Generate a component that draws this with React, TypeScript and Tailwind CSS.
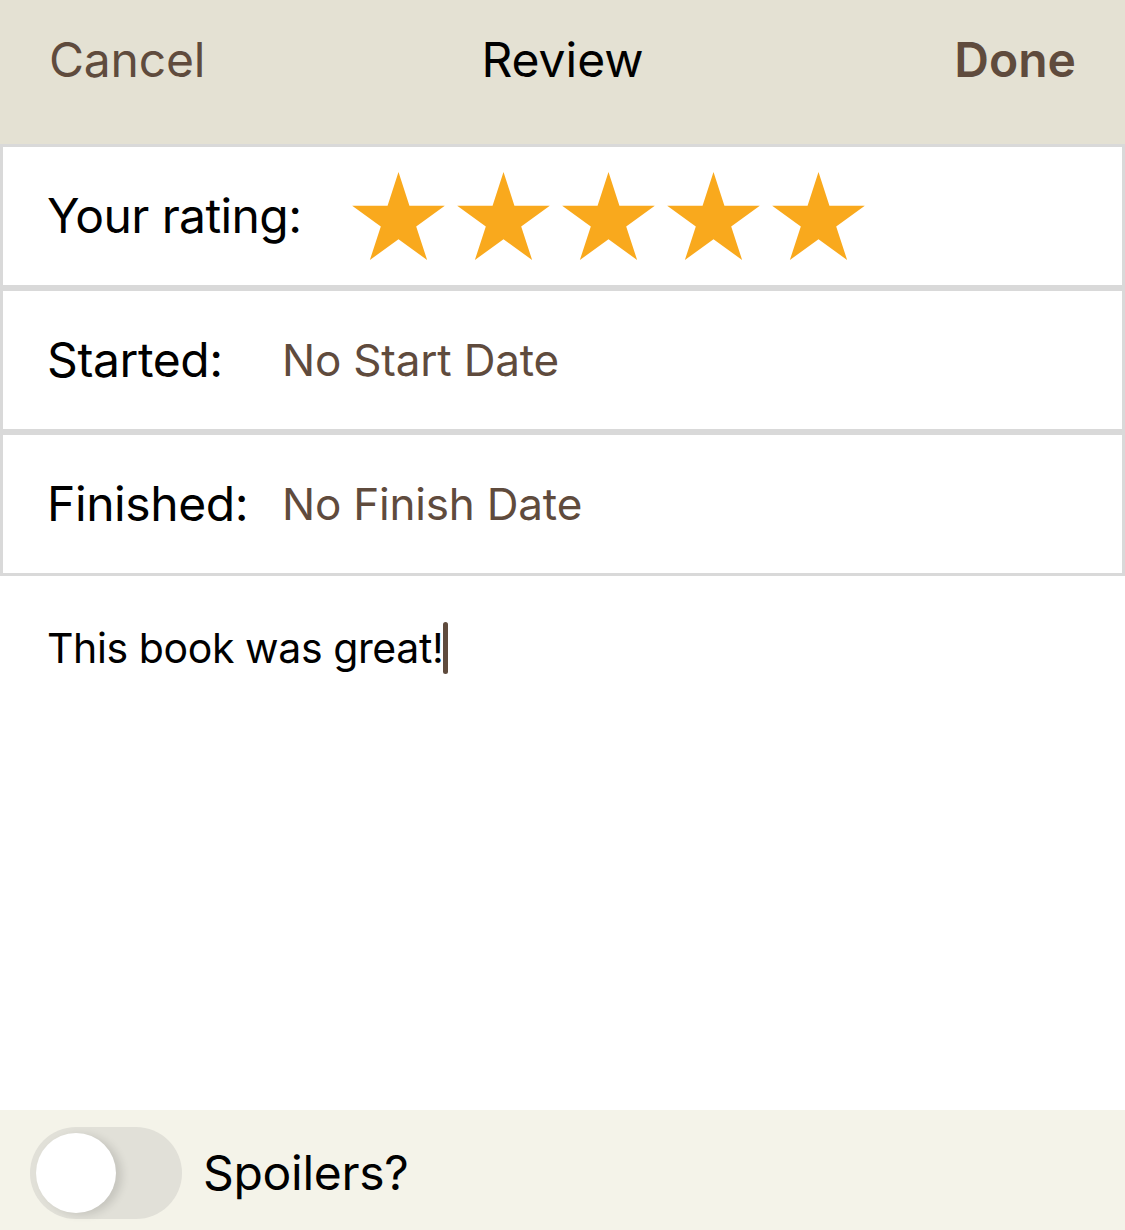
import { useState } from 'react';

const brown = 'text-[#5f4b3d]';

function Star() {
  return (
    <svg viewBox="0 0 100 95" className="w-[93px] h-[88px]">
      <polygon
        points="50,0 61.8,36.3 100,36.3 69.1,58.8 80.9,95 50,72.6 19.1,95 30.9,58.8 0,36.3 38.2,36.3"
        fill="#f9a91d"
      />
    </svg>
  );
}

type DateRowProps = {
  label: string;
  value: string;
};

function DateRow(props: DateRowProps) {
  const { label, value } = props;
  return (
    <div className="flex items-center h-[144px] border-[3px] border-[#d9d9d9] pl-[44px]">
      <span className="w-[235px] text-[48px] tracking-[-0.4px] text-black">{label}</span>
      <span className={`text-[44px] tracking-[-0.2px] ${brown}`}>{value}</span>
    </div>
  );
}

export default function App() {
  const [spoilers, setSpoilers] = useState(false);

  return (
    <div
      className="w-[1125px] h-[1230px] flex flex-col bg-white overflow-hidden"
      style={{ fontFamily: 'Inter, "Noto Sans", sans-serif' }}
    >
      {/* Nav bar */}
      <header className="h-[144px] shrink-0 bg-[#e4e1d3] flex items-center px-[49px] pb-[24px]">
        <div className="flex-1">
          <button className={`text-[48px] tracking-[-0.2px] ${brown}`}>Cancel</button>
        </div>
        <div className="flex-1 text-center text-[48px] text-black">Review</div>
        <div className="flex-1 text-right">
          <button className={`text-[48px] font-semibold ${brown}`}>Done</button>
        </div>
      </header>

      {/* Rating */}
      <div className="flex items-center h-[144px] border-[3px] border-[#d9d9d9] pl-[44px]">
        <span className="w-[305px] text-[48px] tracking-[-0.6px] text-black">Your rating:</span>
        <div className="flex gap-[12px]">
          <Star />
          <Star />
          <Star />
          <Star />
          <Star />
        </div>
      </div>

      <DateRow label="Started:" value="No Start Date" />
      <DateRow label="Finished:" value="No Finish Date" />

      {/* Review text */}
      <div className="flex-1 pl-[47px] pt-[46px]">
        <p className="text-[41px] leading-[52px] tracking-[-0.4px] text-black">
          This book was great!
          <span className="inline-block w-[5px] h-[52px] bg-[#5f4b3d] rounded-full align-top" />
        </p>
      </div>

      {/* Spoilers toggle */}
      <footer className="h-[120px] shrink-0 bg-[#f4f3e9] flex items-center gap-[21px] pl-[30px] pt-[6px]">
        <button
          onClick={() => setSpoilers(!spoilers)}
          className={`w-[152px] h-[92px] rounded-full flex items-center px-[6px] ${
            spoilers ? 'bg-[#8bc34a] justify-end' : 'bg-[#e1e0d8] justify-start'
          }`}
        >
          <span className="w-[80px] h-[80px] rounded-full bg-white shadow-[6px_2px_8px_rgba(0,0,0,0.12)]" />
        </button>
        <span className="text-[48px] tracking-[-0.3px] text-black">Spoilers?</span>
      </footer>
    </div>
  );
}
